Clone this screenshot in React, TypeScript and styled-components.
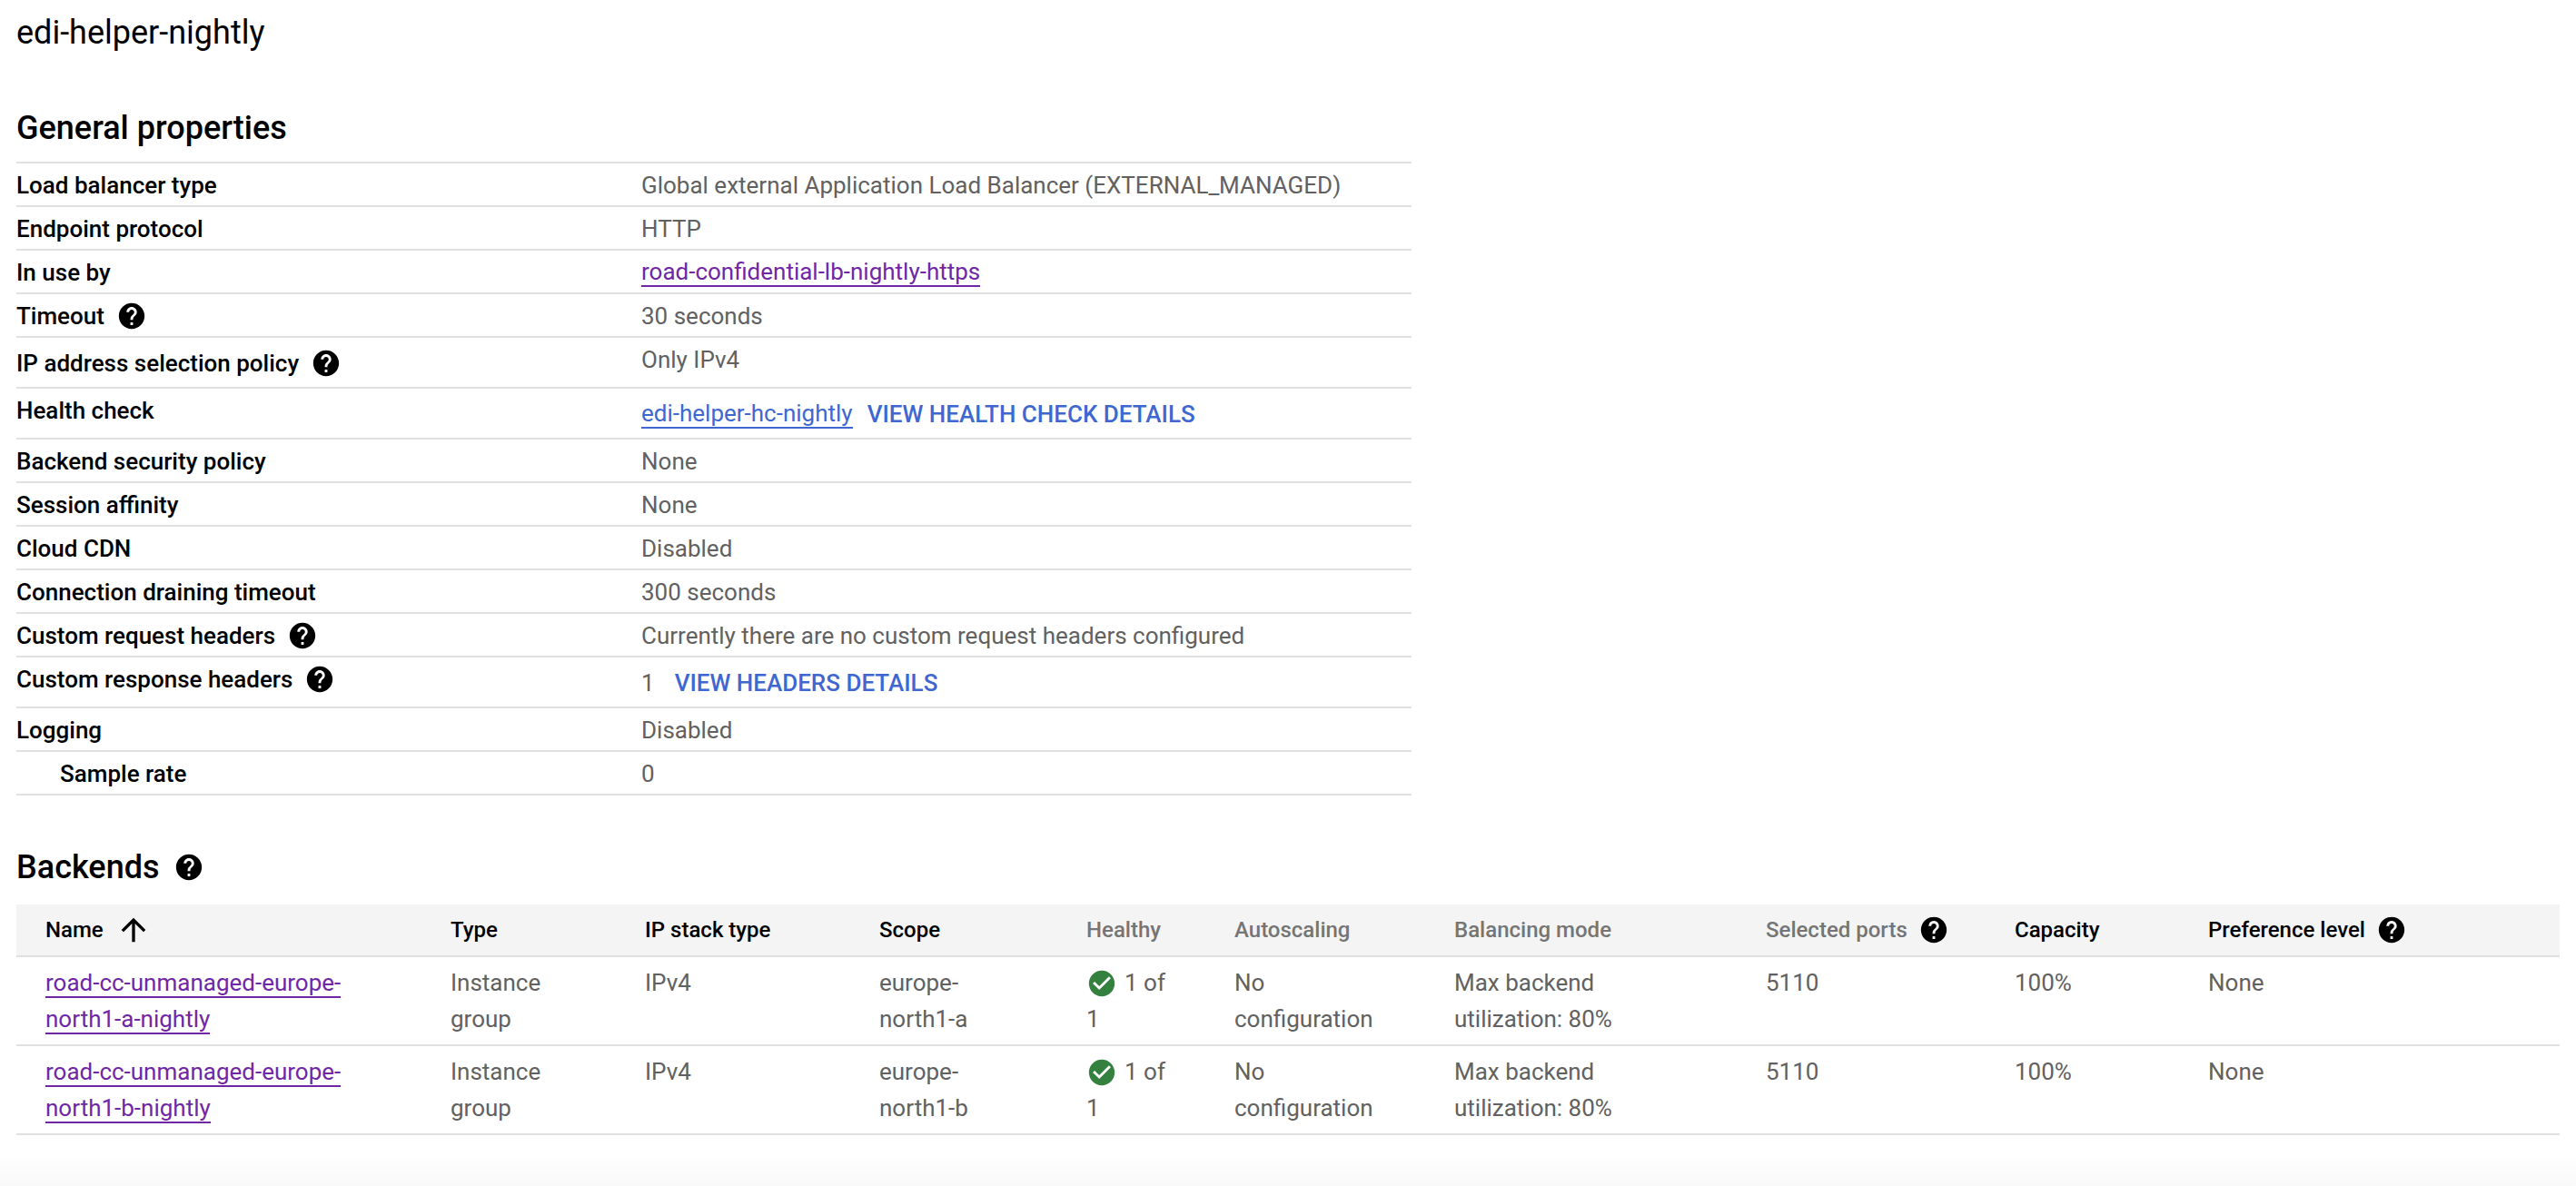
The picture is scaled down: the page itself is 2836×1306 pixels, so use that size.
import React from "react";
import styled, { createGlobalStyle } from "styled-components";

const Global = createGlobalStyle`
  html, body { margin: 0; padding: 0; background: #fff; }
  body { font-family: Roboto, "Liberation Sans", sans-serif; font-size: 26px; color: #000; }
`;

const Page = styled.div`
  width: 2836px;
  height: 1306px;
  overflow: hidden;
  box-sizing: border-box;
  padding: 14px 18px 0;
  background: linear-gradient(to bottom, #fff 0, #fff 1270px, #f9f9f9 1306px);
`;

const Title = styled.h1`
  margin: 0;
  font-size: 36px;
  line-height: 44px;
  font-weight: 400;
`;

const SectionTitle = styled.h2<{ $top: number }>`
  display: flex;
  align-items: center;
  gap: 16px;
  margin: ${(p) => p.$top}px 0 0;
  font-size: 36px;
  line-height: 44px;
  font-weight: 500;
`;

const Properties = styled.div`
  width: 1536px;
  margin-top: 15px;
  border-top: 2px solid #e0e0e0;
`;

const PropRow = styled.div<{ $tall?: boolean }>`
  display: grid;
  grid-template-columns: 688px 1fr;
  height: ${(p) => (p.$tall ? 54 : 46)}px;
  border-bottom: 2px solid #e0e0e0;
`;

const PropLabel = styled.div<{ $place?: string; $indent?: boolean }>`
  display: flex;
  align-items: center;
  gap: 13px;
  box-sizing: border-box;
  height: 46px;
  padding-top: 2px;
  align-self: ${(p) => p.$place || "start"};
  padding-left: ${(p) => (p.$indent ? 48 : 0)}px;
  font-weight: 500;
  color: #000;
`;

const PropValue = styled.div<{ $place?: string; $gap?: number }>`
  display: flex;
  align-items: center;
  gap: ${(p) => p.$gap ?? 16}px;
  box-sizing: border-box;
  height: 46px;
  padding-top: 2px;
  align-self: ${(p) => p.$place || "start"};
  color: #616161;
`;

const Link = styled.a<{ $visited?: boolean }>`
  color: ${(p) => (p.$visited ? "#7027a5" : "#3f67d1")};
  border-bottom: 2px solid currentColor;
`;

const ActionLink = styled.a`
  color: #3f67d1;
  font-weight: 500;
`;

const Table = styled.div`
  width: 2800px;
  margin-top: 19px;
`;

const columns = "446px 214px 258px 228px 163px 242px 343px 274px 213px 419px";

const HeadRow = styled.div`
  display: grid;
  grid-template-columns: ${columns};
  height: 56px;
  background: #f4f4f4;
  border-bottom: 2px solid #e0e0e0;
`;

const HeadCell = styled.div<{ $muted?: boolean }>`
  display: flex;
  align-items: center;
  gap: 12px;
  padding-left: 32px;
  font-size: 24px;
  font-weight: 500;
  color: ${(p) => (p.$muted ? "#757575" : "#000")};
`;

const BodyRow = styled.div`
  display: grid;
  grid-template-columns: ${columns};
  height: 96px;
  border-bottom: 2px solid #e0e0e0;
`;

const BodyCell = styled.div`
  padding: 8px 32px;
  line-height: 40px;
  color: #616161;
`;

const StatusIcon = styled.svg`
  width: 34px;
  height: 34px;
  margin: 0 8px 0 0;
  vertical-align: -9px;
  fill: #34803f;
`;

const HelpSvg = styled.svg`
  flex: none;
  width: 34px;
  height: 34px;
  fill: #000;
`;

const Arrow = styled.svg`
  flex: none;
  width: 40px;
  height: 40px;
  margin-left: 1px;
  fill: #000;
`;

const Help = () => (
  <HelpSvg viewBox="0 0 24 24" aria-hidden="true">
    <path d="M12 2C6.48 2 2 6.48 2 12s4.48 10 10 10 10-4.48 10-10S17.52 2 12 2zm1 17h-2v-2h2v2zm2.07-7.75l-.9.92C13.45 12.9 13 13.5 13 15h-2v-.5c0-1.1.45-2.1 1.17-2.83l1.24-1.26c.37-.36.59-.86.59-1.41 0-1.1-.9-2-2-2s-2 .9-2 2H8c0-2.21 1.79-4 4-4s4 1.79 4 4c0 .88-.36 1.68-.93 2.25z" />
  </HelpSvg>
);

const Healthy = () => (
  <StatusIcon viewBox="0 0 24 24" aria-hidden="true">
    <path d="M12 2C6.48 2 2 6.48 2 12s4.48 10 10 10 10-4.48 10-10S17.52 2 12 2zm-2 15l-5-5 1.41-1.41L10 14.17l7.59-7.59L19 8l-9 9z" />
  </StatusIcon>
);

const backends = [
  { name: "road-cc-unmanaged-europe-north1-a-nightly", scope: "europe-north1-a" },
  { name: "road-cc-unmanaged-europe-north1-b-nightly", scope: "europe-north1-b" },
];

export default function App() {
  return (
    <Page>
      <Global />
      <Title>edi-helper-nightly</Title>
      <SectionTitle $top={61}>General properties</SectionTitle>
      <Properties>
        <PropRow>
          <PropLabel>Load balancer type</PropLabel>
          <PropValue>Global external Application Load Balancer (EXTERNAL_MANAGED)</PropValue>
        </PropRow>
        <PropRow>
          <PropLabel>Endpoint protocol</PropLabel>
          <PropValue>HTTP</PropValue>
        </PropRow>
        <PropRow>
          <PropLabel>In use by</PropLabel>
          <PropValue><Link $visited>road-confidential-lb-nightly-https</Link></PropValue>
        </PropRow>
        <PropRow>
          <PropLabel>Timeout <Help /></PropLabel>
          <PropValue>30 seconds</PropValue>
        </PropRow>
        <PropRow $tall>
          <PropLabel $place="center">IP address selection policy <Help /></PropLabel>
          <PropValue>Only IPv4</PropValue>
        </PropRow>
        <PropRow $tall>
          <PropLabel>Health check</PropLabel>
          <PropValue $place="center">
            <Link>edi-helper-hc-nightly</Link>
            <ActionLink>VIEW HEALTH CHECK DETAILS</ActionLink>
          </PropValue>
        </PropRow>
        <PropRow>
          <PropLabel>Backend security policy</PropLabel>
          <PropValue>None</PropValue>
        </PropRow>
        <PropRow>
          <PropLabel>Session affinity</PropLabel>
          <PropValue>None</PropValue>
        </PropRow>
        <PropRow>
          <PropLabel>Cloud CDN</PropLabel>
          <PropValue>Disabled</PropValue>
        </PropRow>
        <PropRow>
          <PropLabel>Connection draining timeout</PropLabel>
          <PropValue>300 seconds</PropValue>
        </PropRow>
        <PropRow>
          <PropLabel>Custom request headers <Help /></PropLabel>
          <PropValue>Currently there are no custom request headers configured</PropValue>
        </PropRow>
        <PropRow $tall>
          <PropLabel>Custom response headers <Help /></PropLabel>
          <PropValue $place="center" $gap={22}>
            1
            <ActionLink>VIEW HEADERS DETAILS</ActionLink>
          </PropValue>
        </PropRow>
        <PropRow>
          <PropLabel>Logging</PropLabel>
          <PropValue>Disabled</PropValue>
        </PropRow>
        <PropRow>
          <PropLabel $indent>Sample rate</PropLabel>
          <PropValue>0</PropValue>
        </PropRow>
      </Properties>
      <SectionTitle $top={57}>Backends <Help /></SectionTitle>
      <Table>
        <HeadRow>
          <HeadCell>
            Name
            <Arrow viewBox="0 0 24 24" aria-hidden="true">
              <path d="M4 12l1.41 1.41L11 7.83V20h2V7.83l5.58 5.59L20 12l-8-8-8 8z" />
            </Arrow>
          </HeadCell>
          <HeadCell>Type</HeadCell>
          <HeadCell>IP stack type</HeadCell>
          <HeadCell>Scope</HeadCell>
          <HeadCell $muted>Healthy</HeadCell>
          <HeadCell $muted>Autoscaling</HeadCell>
          <HeadCell $muted>Balancing mode</HeadCell>
          <HeadCell $muted>Selected ports <Help /></HeadCell>
          <HeadCell>Capacity</HeadCell>
          <HeadCell>Preference level <Help /></HeadCell>
        </HeadRow>
        {backends.map((b) => (
          <BodyRow key={b.name}>
            <BodyCell><Link $visited>{b.name}</Link></BodyCell>
            <BodyCell>Instance group</BodyCell>
            <BodyCell>IPv4</BodyCell>
            <BodyCell>{b.scope}</BodyCell>
            <BodyCell><Healthy />1 of 1</BodyCell>
            <BodyCell>No configuration</BodyCell>
            <BodyCell>Max backend utilization: 80%</BodyCell>
            <BodyCell>5110</BodyCell>
            <BodyCell>100%</BodyCell>
            <BodyCell>None</BodyCell>
          </BodyRow>
        ))}
      </Table>
    </Page>
  );
}
